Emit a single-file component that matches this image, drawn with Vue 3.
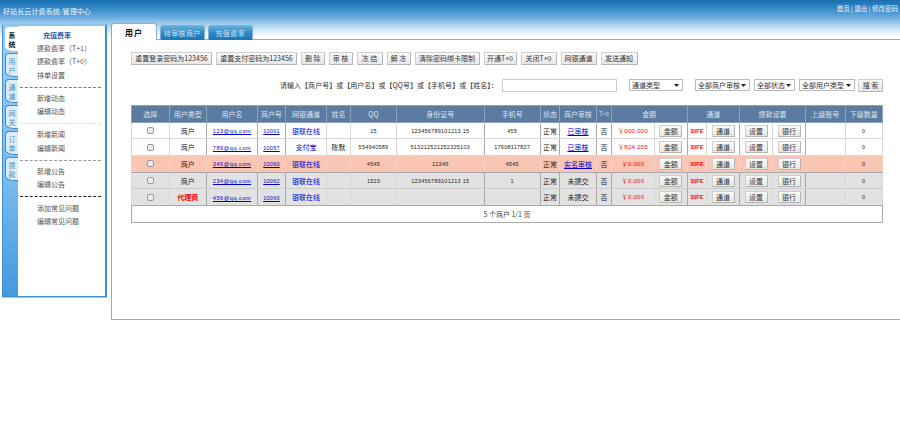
<script setup>
const sideTabs = ['系统', '用户', '通道', '网关', '订单', '提款']
const groups = [
  [{ t: '充值费率', cls: 'lead' }, { t: '提款费率（T+1）' }, { t: '提款费率（T+0）' }, { t: '排单设置' }],
  [{ t: '新增动态' }, { t: '编辑动态' }],
  [{ t: '新增新闻' }, { t: '编辑新闻' }],
  [{ t: '新增公告' }, { t: '编辑公告' }],
  [{ t: '添加常见问题' }, { t: '编辑常见问题' }],
]
const sepClass = ['sep-mix', 'sep-light', 'sep-mid', 'sep-dark']
const actions = [
  { t: '重置登录密码为123456', w: 81 },
  { t: '重置支付密码为123456', w: 81 },
  { t: '删 除', w: 23.5 },
  { t: '审 核', w: 24 },
  { t: '冻 结', w: 26 },
  { t: '解 冻', w: 24 },
  { t: '清除密码绑卡限制', w: 65 },
  { t: '开通T+0', w: 33 },
  { t: '关闭T+0', w: 36 },
  { t: '网银通道', w: 36 },
  { t: '发送通知', w: 37 },
]
const cols = [37.5, 37.5, 51, 28, 41, 24, 46, 87.5, 56.5, 19, 37, 15, 43, 32.5, 19.5, 33, 33, 33, 39.5, 37.5]
const rows = [
  { cls: '', type: '商户', user: '123@qq.com', id: '10001', ch: '银联在线', name: '', qq: '15', card: '123456789101213 15', tel: '455', audit: '已审核', link: true, money: '000.000' },
  { cls: '', type: '商户', user: '789@qq.com', id: '10057', ch: '支付宝', name: '陈默', qq: '554940589', card: '513212521252325103', tel: '17608117827', audit: '已审核', link: true, money: '824.205' },
  { cls: 'pink', type: '商户', user: '345@qq.com', id: '10060', ch: '银联在线', name: '', qq: '4545', card: '12345', tel: '4545', audit: '实名审核', link: true, money: '0.000' },
  { cls: 'gray', type: '商户', user: '234@qq.com', id: '10062', ch: '银联在线', name: '', qq: '1523', card: '123456789101213 15', tel: '1', audit: '未提交', link: false, money: '0.000' },
  { cls: 'gray', type: '代理商', agent: true, user: '456@qq.com', id: '10060', ch: '银联在线', name: '', qq: '', card: '', tel: '', audit: '未提交', link: false, money: '0.000' },
]
</script>

<template>
  <div class="page">
    <header class="top">
      <span class="brand">好站长云计费系统-管理中心</span>
      <span class="toplinks">首页 | 退出 | 修改密码</span>
    </header>
    <div class="body">
      <aside class="side">
        <nav class="strip">
          <div v-for="(s, i) in sideTabs" :key="s" class="stab" :class="{ on: i === 0 }">
            <span>{{ s[0] }}</span><span>{{ s[1] }}</span>
          </div>
        </nav>
        <div class="menu">
          <template v-for="(g, i) in groups" :key="i">
            <ul class="mgroup">
              <li v-for="m in g" :key="m.t" :class="m.cls">{{ m.t }}</li>
            </ul>
            <hr v-if="i < sepClass.length" :class="sepClass[i]" />
          </template>
        </div>
      </aside>
      <main class="main">
        <div class="tabs">
          <div class="tab active">用户</div>
          <div class="tab">待审核商户</div>
          <div class="tab">充值费率</div>
        </div>
        <section class="panel">
          <div class="actions">
            <button v-for="a in actions" :key="a.t" class="btn" :style="{ width: a.w + 'px' }">{{ a.t }}</button>
          </div>
          <div class="search">
            <span class="hint">请输入【商户号】或【用户名】或【QQ号】或【手机号】或【姓名】：</span>
            <input class="kw" type="text" />
            <select class="sel s1"><option>通道类型</option></select>
            <select class="sel s2"><option>全部商户审核</option></select>
            <select class="sel s3"><option>全部状态</option></select>
            <select class="sel s4"><option>全部用户类型</option></select>
            <button class="btn go">搜 索</button>
          </div>
          <table class="grid">
            <colgroup>
              <col v-for="(c, i) in cols" :key="i" :style="{ width: c + 'px' }" />
            </colgroup>
            <thead>
              <tr>
                <th>选择</th><th>用户类型</th><th>用户名</th><th>商户号</th><th>网银通道</th><th>姓名</th>
                <th>QQ</th><th>身份证号</th><th>手机号</th><th>状态</th><th>商户审核</th><th class="tiny">T+0</th>
                <th colspan="2">金额</th><th colspan="2">通道</th><th colspan="2">提款设置</th>
                <th>上级账号</th><th>下级数量</th>
              </tr>
            </thead>
            <tbody>
              <tr v-for="r in rows" :key="r.user" :class="r.cls">
                <td><input class="chk" type="checkbox" /></td>
                <td :class="{ agent: r.agent }">{{ r.type }}</td>
                <td><a class="lnk mail">{{ r.user }}</a></td>
                <td><a class="lnk num">{{ r.id }}</a></td>
                <td class="chan">{{ r.ch }}</td>
                <td>{{ r.name }}</td>
                <td class="num">{{ r.qq }}</td>
                <td class="num">{{ r.card }}</td>
                <td class="num">{{ r.tel }}</td>
                <td>正常</td>
                <td :class="{ chan: r.link, under: r.link }">{{ r.audit }}</td>
                <td>否</td>
                <td class="money">￥{{ r.money }}</td>
                <td><button class="btn cell">金额</button></td>
                <td class="fee">30FE</td>
                <td><button class="btn cell">通道</button></td>
                <td><button class="btn cell">设置</button></td>
                <td><button class="btn cell">银行</button></td>
                <td></td>
                <td class="num">0</td>
              </tr>
            </tbody>
            <tfoot>
              <tr><td colspan="20" class="foot">5 个商户 1/1 页</td></tr>
            </tfoot>
          </table>
        </section>
      </main>
    </div>
  </div>
</template>

<style>
html, body { margin: 0; background: #fff; }
</style>

<style scoped>
.page {
  width: 900px;
  height: 447px;
  overflow: hidden;
  font-family: "Noto Sans CJK SC", "Liberation Sans", sans-serif;
  font-size: 7px;
  color: #222;
  background: linear-gradient(#1a6fb1 0, #2b80c0 6px, #5ea6dc 16px, #bcdcf3 27px, #fff 37px, #fff 38px) no-repeat;
  background-size: 100% 38px;
}
.top {
  height: 23px;
  display: flex;
  justify-content: space-between;
  color: #eaf4fb;
  box-sizing: border-box;
}
.brand { padding: 6px 0 0 3px; font-size: 7px; line-height: 10px; letter-spacing: 0.12px; }
.toplinks { padding: 3px 2px 0 0; font-size: 6.5px; line-height: 10px; }
.body { display: flex; align-items: flex-start; }
.side {
  width: 105px;
  height: 273px;
  margin: 1px 4px 0 2px;
  box-sizing: border-box;
  display: flex;
  border: 1px solid #3e90d2;
  border-right-width: 2px;
  border-top: 2px solid #8cc4ea;
  background: #fff;
  box-shadow: 0 1px 0 #9fc7e6;
}
.strip {
  width: 15px;
  flex: none;
  padding: 1px 0 0 2px;
  box-sizing: border-box;
  background: linear-gradient(#9ccdf2, #7cbcef 55%, #4499dd);
  display: flex;
  flex-direction: column;
  gap: 2px;
}
.stab {
  width: 13px;
  height: 24px;
  box-sizing: border-box;
  display: flex;
  flex-direction: column;
  align-items: center;
  padding-top: 3px;
  line-height: 9px;
  color: #4d8fbf;
  background: #dcedfa;
  border: 1px solid #3f8fcb;
  border-right: 0;
  border-radius: 4px 0 0 9px / 4px 0 0 5px;
  font-size: 7px;
}
.stab.on {
  background: #fff;
  color: #111;
  font-weight: 700;
  border-color: #fff;
}
.menu { flex: 1; padding-top: 2.5px; background: #fff; }
.mgroup { list-style: none; margin: 0; padding: 0; }
.mgroup li {
  height: 13.4px;
  line-height: 13.4px;
  padding-left: 19px;
  color: #555;
  font-size: 7px;
  white-space: nowrap;
}
.mgroup li.lead { padding-left: 25px; color: #2a5ea8; font-weight: 700; }
hr { margin: 4.6px 4px 4.2px 2px; border: 0; border-top: 1px dashed #888; height: 0; }
.sep-mix { border-top-color: #8a7a55; }
.sep-light { border-top-color: #ddd; }
.sep-mid { border-top-color: #999; }
.sep-dark { border-top-color: #222; }
.main { width: 789px; flex: none; }
.tabs { display: flex; gap: 2.5px; height: 17px; margin-bottom: -1px; position: relative; }
.tab {
  width: 45.5px;
  box-sizing: border-box;
  margin-top: 2px;
  border: 1px solid #7fb0d2;
  border-bottom: 0;
  border-radius: 3px 3px 0 0;
  background: linear-gradient(#63aedd, #2f86c2 55%, #1f76b6);
  color: #c9e4f5;
  font-size: 7px;
  line-height: 15px;
  text-align: center;
  letter-spacing: 0.4px;
}
.tab.active {
  width: 46px;
  margin-top: 0;
  height: 17px;
  background: #fff;
  color: #111;
  font-weight: 700;
  font-size: 8px;
  line-height: 17px;
  letter-spacing: 1px;
  z-index: 1;
}
.panel {
  height: 281px;
  box-sizing: border-box;
  border-top: 1px solid #7fb0d2;
  border-left: 1px solid #7fb0d2;
  border-bottom: 1px solid #7fb0d2;
  padding: 12px 0 0 19px;
  background: #fff;
}
.actions { display: flex; gap: 4px; height: 13px; }
.btn {
  box-sizing: border-box;
  height: 13px;
  padding: 0;
  border: 1px solid #cfcfcf;
  border-bottom-color: #b5b5b5;
  border-right-color: #b5b5b5;
  border-radius: 1px;
  background: linear-gradient(#fbfbfb, #e6e6e6);
  font-family: inherit;
  font-size: 7px;
  line-height: 11px;
  color: #333;
  white-space: nowrap;
}
.search {
  display: flex;
  align-items: center;
  height: 14px;
  margin-top: 13px;
  padding-left: 149px;
}
.hint { width: 222px; flex: none; white-space: nowrap; font-size: 7px; letter-spacing: 0.03px; color: #333; }
.kw {
  box-sizing: border-box;
  width: 115px;
  height: 13px;
  border: 1px solid #ccc;
  padding: 0;
  background: #fff;
}
.sel {
  appearance: none;
  box-sizing: border-box;
  height: 12px;
  padding: 0 8px 0 2px;
  border: 1px solid #bbb;
  font-family: inherit;
  font-size: 7px;
  line-height: 10px;
  color: #333;
  background: #fff url("data:image/svg+xml,%3Csvg xmlns='http://www.w3.org/2000/svg' width='5' height='3'%3E%3Cpath d='M0 0h5L2.5 3z' fill='%23222'/%3E%3C/svg%3E") no-repeat right 3px center;
}
.s1 { width: 54px; margin-left: 12px; }
.s2 { width: 55px; margin-left: 12px; }
.s3 { width: 41px; margin-left: 4px; }
.s4 { width: 56px; margin-left: 4px; }
.go { width: 25px; margin-left: 3px; }
.grid {
  table-layout: fixed;
  border-collapse: collapse;
  width: 752px;
  margin-top: 13px;
  border: 1px solid #aaa;
}
th {
  box-sizing: border-box;
  height: 16.7px;
  padding: 0;
  background: #5b7ba0;
  border: 1px solid #8ea3bb;
  color: #dbe5ef;
  font-weight: 400;
  font-size: 7px;
  line-height: 10px;
  white-space: nowrap;
}
th.tiny { font-size: 5.5px; }
td {
  box-sizing: border-box;
  height: 16.7px;
  padding: 0;
  border: 1px solid #d8d8d8;
  text-align: center;
  font-size: 7px;
  line-height: 10px;
  white-space: nowrap;
  overflow: hidden;
}
tbody tr { border-bottom: 1px solid #bbb; }
tbody td:nth-child(2), tbody td:nth-child(3), tbody td:nth-child(4),
tbody td:nth-child(8), tbody td:nth-child(9), tbody td:nth-child(10),
tbody td:nth-child(11), tbody td:nth-child(12), tbody td:nth-child(14),
tbody td:nth-child(16), tbody td:nth-child(18) { border-right-color: #aaa; }
tbody tr.gray td { background: #e2e2e2; border-top-color: #ccc; border-bottom-color: #ccc; }
tbody tr.pink td { background: #fbc5b3; border-color: #f3d3c8; border-top-color: #aaa; border-bottom-color: #aaa; }
tbody tr.gray:last-child td { border-bottom-color: #aaa; }
.chk {
  appearance: none;
  display: block;
  margin: 0 auto;
  width: 7px;
  height: 7px;
  border: 1px solid #999;
  border-radius: 2px;
  background: #eee;
  box-sizing: border-box;
}
.agent { color: #f00; font-weight: 700; }
.lnk { color: #00c; text-decoration: underline; }
.mail, .num { font-family: "Liberation Sans", sans-serif; font-size: 5.5px; letter-spacing: 0.25px; }
.mail { letter-spacing: 0.55px; }
td.chan { color: #00d; }
td.under { text-decoration: underline; }
.money { color: #f00; font-family: "Liberation Sans", "Noto Sans CJK SC", sans-serif; font-size: 6px; letter-spacing: 0.3px; }
.fee { color: #f00; font-family: "Liberation Sans", sans-serif; font-size: 5.5px; font-weight: 700; }
.btn.cell { width: 23px; height: 12px; display: block; margin: 0 auto; }
.foot { color: #444; font-size: 7px; border-color: #aaa; }
</style>
